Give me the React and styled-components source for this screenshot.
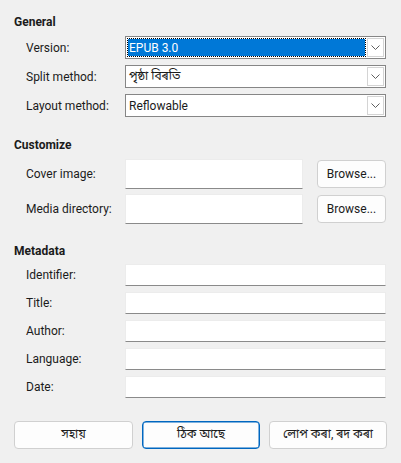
import React from 'react';
import styled, { createGlobalStyle } from 'styled-components';

const GlobalStyle = createGlobalStyle`
  html, body {
    margin: 0;
    padding: 0;
    background: #f0f0f0;
  }
  body {
    font-family: Roboto, "Noto Sans Bengali", "Noto Sans", sans-serif;
    font-size: 12px;
    color: #1b1b1b;
  }
`;

const Dialog = styled.div`
  width: 401px;
  height: 463px;
  box-sizing: border-box;
  padding: 14px 15px 0 14px;
  display: flex;
  flex-direction: column;
`;

const Section = styled.section`
  display: flex;
  flex-direction: column;
  margin-bottom: ${p => p.$after || 0}px;
`;

const Heading = styled.h3`
  margin: 0 0 ${p => p.$gap || 6}px 0;
  font-size: 12px;
  line-height: 16px;
  font-weight: 700;
  color: #1b1b1b;
`;

const Rows = styled.div`
  display: flex;
  flex-direction: column;
  gap: ${p => p.$gap}px;
`;

const Row = styled.div`
  display: grid;
  grid-template-columns: 99px 1fr ${p => (p.$button ? '83px' : '')};
  align-items: center;
  padding-left: 12px;
`;

const Label = styled.label`
  line-height: 16px;
  white-space: nowrap;
`;

const Combo = styled.div`
  height: 23px;
  box-sizing: border-box;
  border: 1px solid #868686;
  background: #fff;
  display: flex;
  align-items: stretch;
  padding: 1px;
`;

const ComboValue = styled.div`
  flex: 1;
  display: flex;
  align-items: center;
  padding-left: 1px;
  box-sizing: border-box;
  background: ${p => (p.$focused ? '#0078d7' : '#fff')};
  background-clip: padding-box;
  color: ${p => (p.$focused ? '#fff' : '#1b1b1b')};
  border: 1px ${p => (p.$focused ? 'dotted #000' : 'solid transparent')};
  white-space: nowrap;
`;

const ComboArrow = styled.div`
  width: 17px;
  box-sizing: border-box;
  border: 1px solid #d4d4d4;
  background: #fff;
  display: flex;
  align-items: center;
  justify-content: center;
  margin-left: 1px;
`;

const TextField = styled.div`
  height: ${p => p.$h}px;
  box-sizing: border-box;
  background: #fff;
  border: 1px solid #ececec;
  border-bottom: 1px solid #8a8a8a;
`;

const Button = styled.button`
  height: ${p => p.$h || 28}px;
  box-sizing: border-box;
  background: #fdfdfd;
  border: 1px solid ${p => (p.$default ? '#0067c0' : '#d0d0d0')};
  border-radius: 4px;
  font-family: inherit;
  font-size: 12px;
  color: #1b1b1b;
  padding: 0;
  box-shadow: ${p => (p.$default ? 'inset 0 0 0 0.5px #0067c0' : 'none')};
`;

const BrowseButton = styled(Button)`
  width: 69px;
  justify-self: end;
`;

const Footer = styled.div`
  display: grid;
  grid-template-columns: 119px 118px 118px;
  column-gap: 9px;
  margin-top: auto;
  margin-bottom: 14px;
`;

const Chevron = () => (
  <svg width="9" height="5" viewBox="0 0 9 5">
    <path d="M0.5 0.5 L4.5 4.5 L8.5 0.5" fill="none" stroke="#5f5f5f" strokeWidth="1" />
  </svg>
);

const ComboBox = ({ value, focused }) => (
  <Combo>
    <ComboValue $focused={focused}>{value}</ComboValue>
    <ComboArrow><Chevron /></ComboArrow>
  </Combo>
);

const metadata = ['Identifier:', 'Title:', 'Author:', 'Language:', 'Date:'];

export default function App() {
  return (
    <>
      <GlobalStyle />
      <Dialog>
        <Section $after={20}>
          <Heading $gap={6}>General</Heading>
          <Rows $gap={6}>
            <Row><Label>Version:</Label><ComboBox value="EPUB 3.0" focused /></Row>
            <Row><Label>Split method:</Label><ComboBox value="পৃষ্ঠা বিৰতি" /></Row>
            <Row><Label>Layout method:</Label><ComboBox value="Reflowable" /></Row>
          </Rows>
        </Section>

        <Section $after={19}>
          <Heading $gap={6}>Customize</Heading>
          <Rows $gap={5}>
            <Row $button><Label>Cover image:</Label><TextField $h={30} /><BrowseButton $h={28}>Browse...</BrowseButton></Row>
            <Row $button><Label>Media directory:</Label><TextField $h={30} /><BrowseButton $h={28}>Browse...</BrowseButton></Row>
          </Rows>
        </Section>

        <Section>
          <Heading $gap={5}>Metadata</Heading>
          <Rows $gap={6}>
            {metadata.map(m => (
              <Row key={m}><Label>{m}</Label><TextField $h={22} /></Row>
            ))}
          </Rows>
        </Section>

        <Footer>
          <Button>সহায়</Button>
          <Button $default>ঠিক আছে</Button>
          <Button>লোপ কৰা, ৰদ কৰা</Button>
        </Footer>
      </Dialog>
    </>
  );
}
